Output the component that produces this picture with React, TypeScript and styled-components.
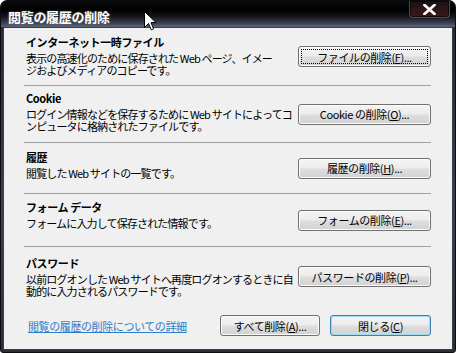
import React from 'react';
import styled, { createGlobalStyle } from 'styled-components';

const GlobalStyle = createGlobalStyle`
  html, body {
    margin: 0;
    padding: 0;
    background: #ffffff;
  }
  body {
    font-family: "Noto Sans CJK JP", "Liberation Sans", sans-serif;
  }
`;

type Item = {
  title: string;
  lines: string[];
  label: string;
  key: string;
  height: number;
  top: number;
  focus?: boolean;
};

const items: Item[] = [
  {
    title: 'インターネット一時ファイル',
    lines: ['表示の高速化のために保存された Web ページ、イメー', 'ジおよびメディアのコピーです。'],
    label: 'ファイルの削除(',
    key: 'F',
    height: 58,
    top: 6,
    focus: true,
  },
  {
    title: 'Cookie',
    lines: ['ログイン情報などを保存するために Web サイトによってコ', 'ンピュータに格納されたファイルです。'],
    label: 'Cookie の削除(',
    key: 'O',
    height: 57,
    top: 4,
  },
  {
    title: '履歴',
    lines: ['閲覧した Web サイトの一覧です。'],
    label: '履歴の削除(',
    key: 'H',
    height: 51,
    top: 6,
  },
  {
    title: 'フォーム データ',
    lines: ['フォームに入力して保存された情報です。'],
    label: 'フォームの削除(',
    key: 'E',
    height: 53,
    top: 5,
  },
  {
    title: 'パスワード',
    lines: ['以前ログオンした Web サイトへ再度ログオンするときに自', '動的に入力されるパスワードです。'],
    label: 'パスワードの削除(',
    key: 'P',
    height: 59,
    top: 8,
  },
];

const App = () => {
  return (
    <>
      <GlobalStyle />
      <Window>
        <TitleBar>
          <Title>閲覧の履歴の削除</Title>
          <CloseButton>
            <svg width="13" height="11" viewBox="0 0 13 11">
              <path d="M1.5 1 L11.5 10 M11.5 1 L1.5 10" stroke="#ffffff" strokeWidth="2.6" strokeLinecap="square" />
            </svg>
          </CloseButton>
        </TitleBar>
        <Client>
          <Sections>
            {items.map((it, i) => (
              <Section key={it.key} $h={it.height} $last={i === items.length - 1}>
                <TextBlock $top={it.top}>
                  <Heading>{it.title}</Heading>
                  <Desc>
                    {it.lines.map((l, j) => (
                      <React.Fragment key={l}>
                        {j > 0 && <br />}
                        {l}
                      </React.Fragment>
                    ))}
                  </Desc>
                </TextBlock>
                <Button $w={133}>
                  <Label $focus={it.focus}>
                    {it.label}
                    <u>{it.key}</u>)...
                  </Label>
                </Button>
              </Section>
            ))}
          </Sections>
          <Footer>
            <Link>閲覧の履歴の削除についての詳細</Link>
            <FooterButtons>
              <Button $w={100}>
                <Label>
                  すべて削除(<u>A</u>)...
                </Label>
              </Button>
              <Button $w={101} $default>
                <Label>
                  閉じる(<u>C</u>)
                </Label>
              </Button>
            </FooterButtons>
          </Footer>
        </Client>
        <Cursor width="13" height="20" viewBox="0 0 13 20">
          <path
            d="M0.5 0.5 L0.5 16.5 L4.5 12.5 L7.2 18.8 L9.6 17.8 L7 11.6 L12 11.6 Z"
            fill="#ffffff"
            stroke="#000000"
            strokeWidth="1"
            strokeLinejoin="miter"
          />
        </Cursor>
      </Window>
    </>
  );
};

export default App;

const Window = styled.div`
  position: relative;
  width: 456px;
  height: 353px;
  box-sizing: border-box;
  display: flex;
  flex-direction: column;
  background: linear-gradient(180deg, #050608 0%, #15181f 5%, #262a35 8%, #3c4150 60%, #2b2f3a 100%);
  border: 1px solid #0c0d10;
  border-radius: 7px 7px 3px 3px;
  overflow: hidden;
`;

const TitleBar = styled.div`
  height: 26px;
  flex-shrink: 0;
  display: flex;
  align-items: flex-start;
  justify-content: space-between;
  padding: 0 5px 0 7px;
  background: linear-gradient(180deg, #0a0a0c 0%, #000000 35%, #14161c 60%, #3b4152 85%, #5d6579 100%);
`;

const Title = styled.span`
  color: #ffffff;
  font-size: 13px;
  font-weight: 700;
  line-height: 13px;
  margin-top: 9px;
  letter-spacing: -0.3px;
  text-shadow: 0 0 3px rgba(255, 255, 255, 0.25);
`;

const CloseButton = styled.div`
  width: 41px;
  height: 17px;
  display: flex;
  align-items: center;
  justify-content: center;
  box-sizing: border-box;
  border: 1px solid #4a4c55;
  border-top: none;
  border-radius: 0 0 4px 4px;
  background: linear-gradient(180deg, #1a1113 0%, #2c1618 50%, #3a1a1c 100%);
  box-shadow: inset 0 0 0 1px rgba(0, 0, 0, 0.6);
`;

const Client = styled.div`
  flex: 1;
  margin: 0 2px 2px;
  background: #f0f0f0;
  border: 1px solid #3a3e4a;
  display: flex;
  flex-direction: column;
`;

const Sections = styled.div`
  margin-left: 20px;
  width: 407px;
  display: flex;
  flex-direction: column;
`;

const Section = styled.div<{ $h: number; $last?: boolean }>`
  height: ${(p) => p.$h}px;
  box-sizing: border-box;
  display: flex;
  align-items: center;
  justify-content: space-between;
  border-bottom: ${(p) => (p.$last ? 'none' : '1px solid #a0a0a0')};
`;

const TextBlock = styled.div<{ $top: number }>`
  align-self: flex-start;
  padding: ${(p) => p.$top}px 0 0 2px;
  display: flex;
  flex-direction: column;
`;

const Heading = styled.div`
  font-size: 11px;
  font-weight: 700;
  line-height: 16px;
  color: #000000;
  letter-spacing: -0.4px;
`;

const Desc = styled.div`
  margin-top: 2px;
  font-size: 11px;
  line-height: 12px;
  color: #000000;
  letter-spacing: -0.85px;
  white-space: nowrap;
`;

const Button = styled.div<{ $w: number; $default?: boolean }>`
  width: ${(p) => p.$w}px;
  height: 21px;
  box-sizing: border-box;
  padding: 2px;
  display: flex;
  border: 1px solid ${(p) => (p.$default ? '#3c7fb1' : '#707070')};
  border-radius: 3px;
  background: linear-gradient(180deg, #f4f4f4 0%, #ececec 48%, #dedede 52%, #d2d2d2 100%);
  box-shadow: ${(p) => (p.$default ? 'inset 0 0 0 1px #9fdcf3' : 'inset 0 0 0 1px #fbfbfb')};
  font-size: 11px;
  color: #000000;
`;

const Label = styled.span<{ $focus?: boolean }>`
  flex: 1;
  display: flex;
  align-items: center;
  justify-content: center;
  white-space: pre;
  letter-spacing: -0.4px;
  line-height: 12px;
  border: 1px dotted ${(p) => (p.$focus ? '#000000' : 'transparent')};
  u {
    text-underline-offset: 1px;
  }
`;

const Footer = styled.div`
  display: flex;
  align-items: center;
  justify-content: space-between;
  margin: 9px 21px 0 24px;
`;

const Link = styled.span`
  font-size: 11px;
  line-height: 12px;
  letter-spacing: -0.4px;
  color: #2f7ec8;
  text-decoration: underline;
`;

const FooterButtons = styled.div`
  display: flex;
  gap: 10px;
`;

const Cursor = styled.svg`
  position: absolute;
  left: 143px;
  top: 10px;
`;
